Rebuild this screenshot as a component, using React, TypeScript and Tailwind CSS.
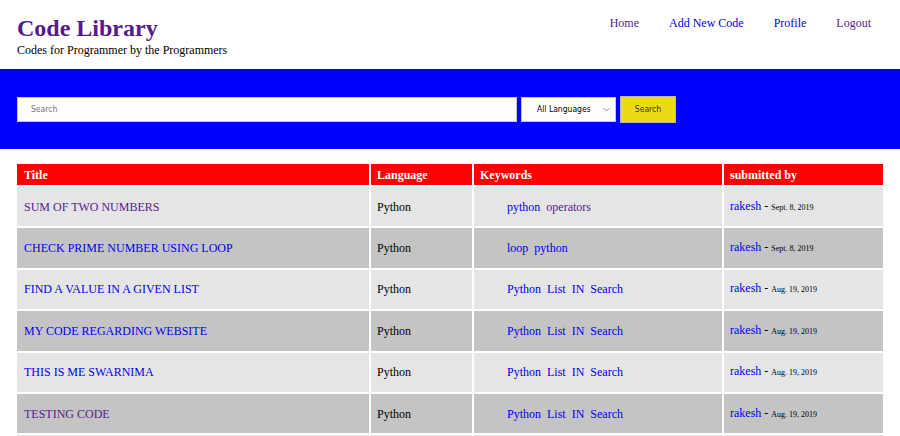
import React from "react";

type Kw = { t: string; v?: boolean };
type Row = { title: string; tv?: boolean; kws: Kw[]; date: string };

const rows: Row[] = [
  { title: "SUM OF TWO NUMBERS", tv: true, kws: [{ t: "python" }, { t: "operators", v: true }], date: "Sept. 8, 2019" },
  { title: "CHECK PRIME NUMBER USING LOOP", kws: [{ t: "loop" }, { t: "python" }], date: "Sept. 8, 2019" },
  { title: "FIND A VALUE IN A GIVEN LIST", kws: [{ t: "Python" }, { t: "List" }, { t: "IN" }, { t: "Search" }], date: "Aug. 19, 2019" },
  { title: "MY CODE REGARDING WEBSITE", kws: [{ t: "Python" }, { t: "List" }, { t: "IN" }, { t: "Search" }], date: "Aug. 19, 2019" },
  { title: "THIS IS ME SWARNIMA", kws: [{ t: "Python" }, { t: "List" }, { t: "IN" }, { t: "Search" }], date: "Aug. 19, 2019" },
  { title: "TESTING CODE", tv: true, kws: [{ t: "Python" }, { t: "List" }, { t: "IN" }, { t: "Search" }], date: "Aug. 19, 2019" },
];

export default function App() {
  return (
    <div className="w-[900px] h-[436px] overflow-hidden bg-white font-['Liberation_Serif','Times_New_Roman',serif]">
      <header className="h-[69px] flex justify-between">
        <div className="pl-[17px] pt-[14px]">
          <h1 className="text-[24px] font-bold leading-[28px] text-[#551a8b]">Code Library</h1>
          <p className="mt-[1px] text-[12px] leading-[14px] text-black">Codes for Programmer by the Programmers</p>
        </div>
        <nav className="flex gap-[30px] pt-[16px] pr-[29px] text-[12px] leading-[14px]">
          <a className="text-[#551a8b]">Home</a>
          <a className="text-[#0000ee]">Add New Code</a>
          <a className="text-[#0000ee]">Profile</a>
          <a className="text-[#551a8b]">Logout</a>
        </nav>
      </header>

      <div className="h-[80px] bg-[#0000ff] flex items-center gap-[4px] pl-[17px] pt-[1px] font-['Tahoma','DejaVu_Sans_Condensed','Liberation_Sans',sans-serif] text-[8.5px]">
        <div className="w-[500px] h-[25px] bg-white border border-[#c8c8c8] flex items-center pl-[13px] text-[#777]">
          Search
        </div>
        <div className="w-[95px] h-[25px] bg-white border border-[#c8c8c8] flex items-center justify-between pl-[15px] pr-[5px] text-black">
          <span>All Languages</span>
          <svg width="7" height="5" viewBox="0 0 7 5"><path d="M0.5 1 L3.5 4 L6.5 1" fill="none" stroke="#888" strokeWidth="0.9" /></svg>
        </div>
        <div className="w-[56px] h-[27px] bg-[#ebdb17] border border-[#b7b7b7] flex items-center justify-center text-[#333]">
          Search
        </div>
      </div>

      <table className="ml-[15px] mt-[13px] border-separate border-spacing-[2px] table-fixed w-[870px] text-[12px] leading-[14px]">
        <colgroup>
          <col className="w-[352px]" />
          <col className="w-[101px]" />
          <col className="w-[248px]" />
          <col className="w-[159px]" />
        </colgroup>
        <thead>
          <tr className="bg-[#ff0000] text-white font-bold text-left">
            <th className="h-[21px] px-[7px] py-0">Title</th>
            <th className="h-[21px] px-[6px] py-0">Language</th>
            <th className="h-[21px] px-[6px] py-0">Keywords</th>
            <th className="h-[21px] px-[6px] py-0">submitted by</th>
          </tr>
        </thead>
        <tbody>
          {rows.map((r, i) => (
            <tr key={i} className={i % 2 === 0 ? "bg-[#e5e5e5]" : "bg-[#c4c4c4]"}>
              <td className="h-[39.4px] px-[7px] py-0">
                <a className={r.tv ? "text-[#551a8b]" : "text-[#0000ee]"}>{r.title}</a>
              </td>
              <td className="h-[39.4px] px-[6px] py-0 text-black">Python</td>
              <td className="h-[39.4px] pl-[33px] pr-[6px] py-0">
                {r.kws.map((k, j) => (
                  <a key={j} className={k.v ? "text-[#551a8b] mr-[6px]" : "text-[#0000ee] mr-[6px]"}>{k.t}</a>
                ))}
              </td>
              <td className="h-[39.4px] px-[6px] py-0 text-black">
                <a className="text-[#0000ee]">rakesh</a> - <span className="text-[8px]">{r.date}</span>
              </td>
            </tr>
          ))}
          <tr className="bg-[#e5e5e5]">
            <td className="h-[39.4px]"></td>
            <td className="h-[39.4px]"></td>
            <td className="h-[39.4px]"></td>
            <td className="h-[39.4px]"></td>
          </tr>
        </tbody>
      </table>
    </div>
  );
}
